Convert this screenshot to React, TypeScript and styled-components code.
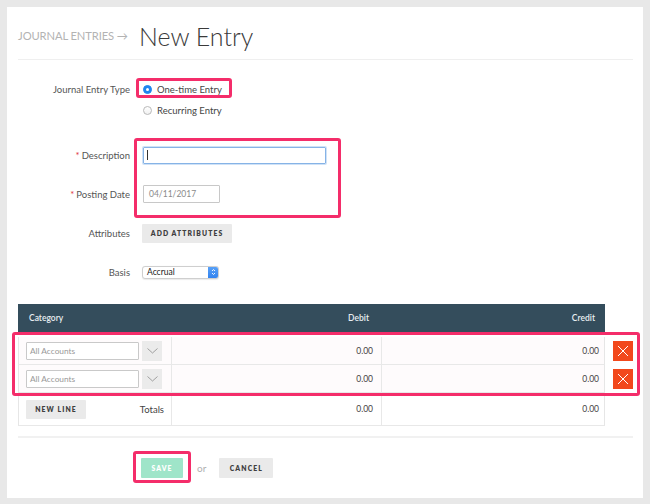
import React from 'react';
import styled, { createGlobalStyle } from 'styled-components';

const PINK = '#f42d6a';

const Global = createGlobalStyle`
  html, body { margin: 0; padding: 0; background: #e8e8e8; }
  body { font-family: Lato, "Open Sans", "Liberation Sans", sans-serif; -webkit-font-smoothing: antialiased; }
  * { box-sizing: border-box; }
`;

const Page = styled.div`
  width: 650px;
  height: 504px;
  padding: 7px 7px 6px 7px;
`;

const Card = styled.div`
  background: #fff;
  height: 491px;
  padding: 0 10px 0 11px;
`;

const Header = styled.div`
  height: 53px;
  padding-top: 5px;
  display: flex;
  align-items: center;
  border-bottom: 1px solid #efefef;
`;

const Crumb = styled.span`
  font-size: 11.2px;
  color: #b3b3b3;
  letter-spacing: -0.1px;
  margin-right: 11px;
`;

const Title = styled.h1`
  margin: 0;
  font-size: 25px;
  font-weight: 300;
  color: #3a3a3a;
`;

const Form = styled.div`
  padding-top: 19px;
`;

const FieldRow = styled.div<{ $mt?: number; $top?: boolean }>`
  display: flex;
  align-items: ${(p) => (p.$top ? 'flex-start' : 'center')};
  height: ${(p) => (p.$top ? 'auto' : '20px')};
  margin-top: ${(p) => p.$mt ?? 0}px;
`;

const Label = styled.div<{ $top?: boolean }>`
  width: 112px;
  margin-right: 12px;
  text-align: right;
  font-size: 9.5px;
  color: #555;
  line-height: ${(p) => (p.$top ? '21px' : 'normal')};
`;

const Req = styled.span`
  color: #e0393e;
  margin-right: 2px;
`;

const RadioList = styled.div`
  display: flex;
  flex-direction: column;
`;

const Option = styled.label<{ $marked?: boolean }>`
  position: relative;
  display: flex;
  align-items: center;
  height: 21px;
  padding-left: 1px;
  font-size: 9.5px;
  color: #444;
  align-self: flex-start;
  ${(p) =>
    p.$marked &&
    `&::after {
      content: '';
      position: absolute;
      left: -6px; right: -10px; top: -1px; bottom: 2px;
      border: 3px solid ${PINK};
      border-radius: 3px;
      pointer-events: none;
    }`}
`;

const RadioDot = styled.span<{ $on?: boolean }>`
  width: 9px;
  height: 9px;
  border-radius: 50%;
  margin-right: 5px;
  display: flex;
  align-items: center;
  justify-content: center;
  background: ${(p) => (p.$on ? '#1f86ef' : 'linear-gradient(#fff, #f1f1f1)')};
  border: 1px solid ${(p) => (p.$on ? '#1f86ef' : '#b9b9b9')};
  &::before {
    content: '';
    width: 3px;
    height: 3px;
    border-radius: 50%;
    background: ${(p) => (p.$on ? '#fff' : 'transparent')};
  }
`;

const DetailsGroup = styled.div`
  position: relative;
  &::after {
    content: '';
    position: absolute;
    left: 116px;
    top: -7px;
    width: 201px;
    height: 74px;
    border: 3px solid ${PINK};
    border-radius: 3px;
    pointer-events: none;
  }
`;

const TextInput = styled.div<{ $w: number; $focus?: boolean }>`
  width: ${(p) => p.$w}px;
  height: ${(p) => (p.$focus ? 17 : 18)}px;
  margin-left: 1px;
  border: 1px solid ${(p) => (p.$focus ? '#86b3e6' : '#c8c8c8')};
  box-shadow: ${(p) => (p.$focus ? '0 0 0 1px #cfe2f7' : 'none')};
  border-radius: 1px;
  display: flex;
  align-items: center;
  padding-left: 5px;
  font-size: 8.5px;
  color: #8a8a8a;
`;

const Caret = styled.span`
  width: 1px;
  height: 10px;
  background: #333;
  margin-left: -2px;
`;

const GrayButton = styled.button<{ $w: number; $h?: number }>`
  width: ${(p) => p.$w}px;
  height: ${(p) => p.$h ?? 19}px;
  border: none;
  border-radius: 1px;
  background: #eaeaea;
  color: #3f3f3f;
  font-family: Lato, "Open Sans", sans-serif;
  font-size: 6.8px;
  font-weight: 800;
  letter-spacing: 1.1px;
  padding: 0;
  text-transform: uppercase;
`;

const Select = styled.div`
  width: 77px;
  height: 13px;
  border: 1px solid #cfcfcf;
  border-radius: 3px;
  background: #fff;
  display: flex;
  align-items: center;
  justify-content: space-between;
  font-size: 8.5px;
  color: #222;
  padding-left: 4px;
  overflow: hidden;
  box-shadow: 0 0.5px 1px rgba(0,0,0,0.08);
`;

const Stepper = styled.span`
  width: 11px;
  height: 13px;
  margin-right: -1px;
  background: linear-gradient(#5ba3f8, #2f80ee);
  border-radius: 0 3px 3px 0;
  display: flex;
  align-items: center;
  justify-content: center;
`;

const TableWrap = styled.div`
  margin-top: 22px;
`;

const cols = '152px 210px 225px';

const HeadRow = styled.div`
  width: 587px;
  height: 28px;
  display: grid;
  grid-template-columns: ${cols};
  align-items: center;
  background: #344d5c;
  color: #e8eef1;
  font-size: 8.5px;
  font-weight: 600;
`;

const HeadCell = styled.div<{ $right?: boolean; $pr?: number }>`
  text-align: ${(p) => (p.$right ? 'right' : 'left')};
  padding-left: ${(p) => (p.$right ? 0 : 11)}px;
  padding-right: ${(p) => p.$pr ?? 0}px;
`;

const LinesGroup = styled.div`
  position: relative;
  padding-top: 5px;
  &::after {
    content: '';
    position: absolute;
    left: -6px;
    right: -7px;
    top: 0;
    bottom: -3px;
    border: 3px solid ${PINK};
    border-radius: 3px;
    pointer-events: none;
  }
`;

const LineRow = styled.div`
  display: flex;
  align-items: center;
`;

const Row = styled.div<{ $h: number; $tint?: boolean }>`
  width: 587px;
  height: ${(p) => p.$h}px;
  display: grid;
  grid-template-columns: ${cols};
  background: ${(p) => (p.$tint ? '#fefbfc' : '#fff')};
  border-left: 1px solid #e6e6e6;
  border-right: 1px solid #e6e6e6;
  border-bottom: 1px solid #e8e8e8;
`;

const CategoryCell = styled.div`
  display: flex;
  align-items: center;
  justify-content: space-between;
  padding: 0 7px 0 7px;
  font-size: 9.5px;
  color: #444;
`;

const AmountCell = styled.div<{ $pr: number }>`
  display: flex;
  align-items: center;
  justify-content: flex-end;
  border-left: 1px solid #e8e8e8;
  padding-right: ${(p) => p.$pr}px;
  font-size: 8.5px;
  color: #444;
`;

const AccountSelect = styled.div`
  width: 113px;
  height: 18px;
  border: 1px solid #c9c9c9;
  border-radius: 1px;
  background: #fff;
  display: flex;
  align-items: center;
  padding-left: 3px;
  font-size: 8.3px;
  color: #999;
`;

const Chevron = styled.div`
  width: 20px;
  height: 20px;
  margin-left: 3px;
  margin-right: auto;
  background: #ebebeb;
  display: flex;
  align-items: center;
  justify-content: center;
`;

const RemoveBtn = styled.button`
  width: 20px;
  height: 20px;
  margin-left: 8px;
  margin-top: -1px;
  border: none;
  padding: 0;
  background: #f2481c;
  display: flex;
  align-items: center;
  justify-content: center;
`;

const Divider = styled.div`
  margin-top: 10px;
  height: 2px;
  background: #f1f1f1;
`;

const Actions = styled.div`
  display: flex;
  align-items: center;
  margin-top: 20px;
  padding-left: 123px;
`;

const SaveWrap = styled.div`
  position: relative;
  &::after {
    content: '';
    position: absolute;
    left: -8px;
    right: -8px;
    top: -7px;
    bottom: -5px;
    border: 3px solid ${PINK};
    border-radius: 3px;
    pointer-events: none;
  }
`;

const SaveButton = styled.button`
  display: block;
  width: 42px;
  height: 20px;
  border: none;
  border-radius: 1px;
  background: #9fe5c9;
  color: #fff;
  font-family: Lato, "Open Sans", sans-serif;
  font-size: 6.8px;
  font-weight: 800;
  letter-spacing: 1.1px;
  padding: 0;
`;

const Or = styled.span`
  margin: 0 13px 0 14px;
  font-size: 10px;
  color: #b0b0b0;
`;

const ChevronIcon = () => (
  <svg width="11" height="6" viewBox="0 0 11 6">
    <path d="M0.5 0.5 L5.5 5 L10.5 0.5" fill="none" stroke="#8c8c8c" strokeWidth="0.8" />
  </svg>
);

const XIcon = () => (
  <svg width="12" height="12" viewBox="0 0 12 12">
    <path d="M1 1 L11 11 M11 1 L1 11" stroke="#fff" strokeWidth="1" />
  </svg>
);

const StepIcon = () => (
  <svg width="5" height="8" viewBox="0 0 5 8">
    <path d="M1 3 L2.5 1.5 L4 3 M1 5 L2.5 6.5 L4 5" fill="none" stroke="#fff" strokeWidth="0.9" />
  </svg>
);

const lines = [0, 1];

export default function App() {
  return (
    <>
      <Global />
      <Page>
        <Card>
          <Header>
            <Crumb>JOURNAL ENTRIES →</Crumb>
            <Title>New Entry</Title>
          </Header>
          <Form>
            <FieldRow $top>
              <Label $top>Journal Entry Type</Label>
              <RadioList>
                <Option $marked>
                  <RadioDot $on />
                  One-time Entry
                </Option>
                <Option>
                  <RadioDot />
                  Recurring Entry
                </Option>
              </RadioList>
            </FieldRow>
            <DetailsGroup>
              <FieldRow $mt={24}>
                <Label><Req>*</Req>Description</Label>
                <TextInput $w={183} $focus>
                  <Caret />
                </TextInput>
              </FieldRow>
              <FieldRow $mt={19}>
                <Label><Req>*</Req>Posting Date</Label>
                <TextInput $w={77}>04/11/2017</TextInput>
              </FieldRow>
            </DetailsGroup>
            <FieldRow $mt={19}>
              <Label>Attributes</Label>
              <GrayButton $w={90}>Add Attributes</GrayButton>
            </FieldRow>
            <FieldRow $mt={19}>
              <Label>Basis</Label>
              <Select>
                Accrual
                <Stepper><StepIcon /></Stepper>
              </Select>
            </FieldRow>
          </Form>
          <TableWrap>
            <HeadRow>
              <HeadCell>Category</HeadCell>
              <HeadCell $right $pr={11}>Debit</HeadCell>
              <HeadCell $right $pr={10}>Credit</HeadCell>
            </HeadRow>
            <LinesGroup>
              {lines.map((i) => (
                <LineRow key={i}>
                  <Row $h={28} $tint>
                    <CategoryCell>
                      <AccountSelect>All Accounts</AccountSelect>
                      <Chevron><ChevronIcon /></Chevron>
                    </CategoryCell>
                    <AmountCell $pr={8}>0.00</AmountCell>
                    <AmountCell $pr={7}>0.00</AmountCell>
                  </Row>
                  <RemoveBtn aria-label="Remove line"><XIcon /></RemoveBtn>
                </LineRow>
              ))}
            </LinesGroup>
            <Row $h={33}>
              <CategoryCell>
                <GrayButton $w={60}>New Line</GrayButton>
                <span>Totals</span>
              </CategoryCell>
              <AmountCell $pr={8}>0.00</AmountCell>
              <AmountCell $pr={7}>0.00</AmountCell>
            </Row>
          </TableWrap>
          <Divider />
          <Actions>
            <SaveWrap>
              <SaveButton>SAVE</SaveButton>
            </SaveWrap>
            <Or>or</Or>
            <GrayButton $w={54} $h={20}>Cancel</GrayButton>
          </Actions>
        </Card>
      </Page>
    </>
  );
}
